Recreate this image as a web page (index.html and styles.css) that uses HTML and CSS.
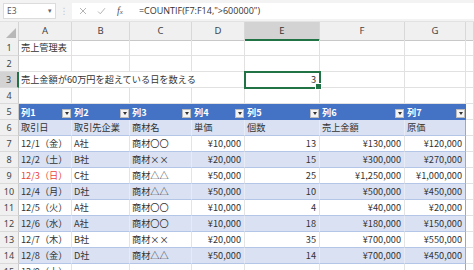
FILE: index.html
```html
<!DOCTYPE html>
<html lang="ja">
<head>
<meta charset="utf-8">
<title>売上管理表</title>
<link rel="stylesheet" href="styles.css">
</head>
<body>
<div class="fbar">
  <div class="namebox"><span>E3</span><span class="caret">▾</span></div>
  <div class="dots">⋮</div>
  <div class="finput">
    <svg class="ico" width="8" height="8" viewBox="0 0 8 8"><path d="M1 1L7 7M7 1L1 7" stroke="#b5b5b5" stroke-width="1" fill="none"/></svg>
    <svg class="ico chk" width="9" height="8" viewBox="0 0 9 8"><path d="M1 4.5L3.3 6.8L8 1.2" stroke="#b5b5b5" stroke-width="1" fill="none"/></svg>
    <span class="fx"><i>f</i><sub>x</sub></span>
    <span class="formula">=COUNTIF(F7:F14,"&gt;600000")</span>
  </div>
</div>
<div class="sheet">
  <div class="row hdr">
    <div class="corner"><svg width="10" height="10" viewBox="0 0 10 10"><path d="M10 0V10H0Z" fill="#b8b8b8"/></svg></div>
    <div class="ch">A</div><div class="ch">B</div><div class="ch">C</div><div class="ch">D</div><div class="ch selc">E</div><div class="ch">F</div><div class="ch">G</div><div class="ch"></div>
  </div>
  <div class="row">
    <div class="rh">1</div><div class="c">売上管理表</div><div class="c"></div><div class="c"></div><div class="c"></div><div class="c"></div><div class="c"></div><div class="c"></div><div class="c"></div>
  </div>
  <div class="row">
    <div class="rh">2</div><div class="c"></div><div class="c"></div><div class="c"></div><div class="c"></div><div class="c"></div><div class="c"></div><div class="c"></div><div class="c"></div>
  </div>
  <div class="row">
    <div class="rh selr">3</div><div class="c span4">売上金額が60万円を超えている日を数える</div><div class="c r sel">3</div><div class="c"></div><div class="c"></div><div class="c"></div>
  </div>
  <div class="row">
    <div class="rh">4</div><div class="c"></div><div class="c"></div><div class="c"></div><div class="c"></div><div class="c"></div><div class="c"></div><div class="c"></div><div class="c"></div>
  </div>
  <div class="row">
    <div class="rh">5</div>
    <div class="th"><span>列1</span><span class="dd"></span></div>
    <div class="th"><span>列2</span><span class="dd"></span></div>
    <div class="th"><span>列3</span><span class="dd"></span></div>
    <div class="th"><span>列4</span><span class="dd"></span></div>
    <div class="th"><span>列5</span><span class="dd"></span></div>
    <div class="th"><span>列6</span><span class="dd"></span></div>
    <div class="th"><span>列7</span><span class="dd"></span></div>
    <div class="c"></div>
  </div>
  <div class="row band">
    <div class="rh">6</div><div class="c t">取引日</div><div class="c t">取引先企業</div><div class="c t">商材名</div><div class="c t">単価</div><div class="c t">個数</div><div class="c t">売上金額</div><div class="c t last">原価</div><div class="c"></div>
  </div>
  <div class="row">
    <div class="rh">7</div><div class="c t">12/1（金）</div><div class="c t">A社</div><div class="c t">商材〇〇</div><div class="c t r">¥10,000</div><div class="c t r">13</div><div class="c t r">¥130,000</div><div class="c t r last">¥120,000</div><div class="c"></div>
  </div>
  <div class="row band">
    <div class="rh">8</div><div class="c t">12/2（土）</div><div class="c t">B社</div><div class="c t">商材××</div><div class="c t r">¥20,000</div><div class="c t r">15</div><div class="c t r">¥300,000</div><div class="c t r last">¥270,000</div><div class="c"></div>
  </div>
  <div class="row">
    <div class="rh">9</div><div class="c t red">12/3（日）</div><div class="c t">C社</div><div class="c t">商材△△</div><div class="c t r">¥50,000</div><div class="c t r">25</div><div class="c t r">¥1,250,000</div><div class="c t r last">¥1,000,000</div><div class="c"></div>
  </div>
  <div class="row band">
    <div class="rh">10</div><div class="c t">12/4（月）</div><div class="c t">D社</div><div class="c t">商材△△</div><div class="c t r">¥50,000</div><div class="c t r">10</div><div class="c t r">¥500,000</div><div class="c t r last">¥450,000</div><div class="c"></div>
  </div>
  <div class="row">
    <div class="rh">11</div><div class="c t">12/5（火）</div><div class="c t">A社</div><div class="c t">商材〇〇</div><div class="c t r">¥10,000</div><div class="c t r">4</div><div class="c t r">¥40,000</div><div class="c t r last">¥20,000</div><div class="c"></div>
  </div>
  <div class="row band">
    <div class="rh">12</div><div class="c t">12/6（水）</div><div class="c t">A社</div><div class="c t">商材〇〇</div><div class="c t r">¥10,000</div><div class="c t r">18</div><div class="c t r">¥180,000</div><div class="c t r last">¥150,000</div><div class="c"></div>
  </div>
  <div class="row">
    <div class="rh">13</div><div class="c t">12/7（木）</div><div class="c t">B社</div><div class="c t">商材××</div><div class="c t r">¥20,000</div><div class="c t r">35</div><div class="c t r">¥700,000</div><div class="c t r last">¥550,000</div><div class="c"></div>
  </div>
  <div class="row band">
    <div class="rh">14</div><div class="c t">12/8（金）</div><div class="c t">D社</div><div class="c t">商材△△</div><div class="c t r">¥50,000</div><div class="c t r">14</div><div class="c t r">¥700,000</div><div class="c t r last">¥450,000</div><div class="c"></div>
  </div>
  <div class="row">
    <div class="rh">15</div><div class="c t">12/9（土）</div><div class="c t"></div><div class="c t"></div><div class="c t"></div><div class="c t"></div><div class="c t"></div><div class="c t last"></div><div class="c"></div>
  </div>
</div>
</body>
</html>
```
FILE: styles.css
```css
* { box-sizing: border-box; }
html, body { margin: 0; padding: 0; }
body {
  width: 474px;
  height: 270px;
  overflow: hidden;
  background: #fff;
  font-family: "Noto Sans CJK JP", "Noto Sans", sans-serif;
}

/* formula bar */
.fbar {
  height: 22px;
  background: #f3f3f3;
  display: flex;
  align-items: center;
  padding-left: 3px;
  border-bottom: 1px solid #e2e2e2;
}
.namebox {
  width: 53px;
  height: 16px;
  background: #fff;
  border: 1px solid #dcdcdc;
  display: flex;
  align-items: center;
  justify-content: space-between;
  padding: 0 3px 0 3px;
  font: 8.5px "Open Sans", sans-serif;
  color: #555;
}
.caret { font-size: 7px; color: #666; }
.dots {
  width: 16px;
  text-align: center;
  color: #c4c4c4;
  font: 9px "DejaVu Sans", sans-serif;
}
.finput {
  flex: 1;
  height: 16px;
  background: #fff;
  display: flex;
  align-items: center;
  padding-left: 7px;
}
.ico { margin-right: 10px; }
.chk { margin-right: 11px; }
.fx {
  font: 9px "Liberation Serif", serif;
  color: #555;
  margin-right: 16px;
  display: flex;
  align-items: baseline;
}
.fx i { font-style: italic; font-size: 10px; }
.fx sub { font-size: 7px; font-style: italic; vertical-align: baseline; margin-left: 0; }
.formula {
  font: 9px "Open Sans", sans-serif;
  color: #333;
  white-space: nowrap;
}

/* sheet */
.sheet { display: flex; flex-direction: column; }
.row {
  display: grid;
  grid-template-columns: 19px 53px 58px 62px 53px 75px 85px 61px 1fr;
  height: 16px;
}
.row.hdr { height: 18px; }
.corner {
  background: #f0f0f0;
  border-right: 1px solid #d4d4d4;
  border-bottom: 1px solid #c8c8c8;
  display: flex;
  align-items: flex-end;
  justify-content: flex-end;
  padding: 0 2px 2px 0;
}
.ch {
  background: #f0f0f0;
  border-right: 1px solid #d8d8d8;
  border-bottom: 1px solid #c8c8c8;
  font: 9.5px "Noto Sans", sans-serif;
  color: #444;
  text-align: center;
  line-height: 17px;
}
.ch.selc {
  background: #d3d3d3;
  border-bottom: 2px solid #217346;
  color: #333;
}
.rh {
  background: #f0f0f0;
  border-right: 1px solid #c8c8c8;
  border-bottom: 1px solid #dadada;
  font: 9px "Noto Sans", sans-serif;
  color: #444;
  text-align: center;
  line-height: 15px;
}
.rh.selr {
  background: #d3d3d3;
  border-right: 2px solid #217346;
}
.c {
  border-right: 1px solid #e1e1e1;
  border-bottom: 1px solid #e1e1e1;
  padding: 0 3px 0 2px;
  font-size: 9.2px;
  line-height: 15px;
  color: #333;
  white-space: nowrap;
}
.c.r { text-align: right; }
.span4 { grid-column: span 4; }
.sel {
  position: relative;
  outline: 2px solid #217346;
  outline-offset: -1px;
}
.sel::after {
  content: "";
  position: absolute;
  right: -3px;
  bottom: -3px;
  width: 5px;
  height: 5px;
  background: #217346;
  border: 1px solid #fff;
}

/* table */
.th {
  background: #4472c4;
  color: #fff;
  font-weight: bold;
  font-size: 9.2px;
  display: flex;
  justify-content: space-between;
  align-items: center;
  padding-left: 2px;
  border-bottom: 1px solid #4472c4;
}
.dd {
  width: 9px;
  height: 9px;
  align-self: flex-end;
  margin: 0 1px 1px 0;
  background: #f4f4f4;
  border: 1px solid #bcbcbc;
  display: flex;
  align-items: center;
  justify-content: center;
}
.dd::before {
  content: "";
  border-left: 2.5px solid transparent;
  border-right: 2.5px solid transparent;
  border-top: 3px solid #333;
}
.c.t {
  border-bottom: 1px solid #b4c6e7;
  border-right: 1px solid #e4e4e4;
}
.band .c.t {
  background: #d9e1f2;
  border-right: 1px solid #e6ebf6;
}
.c.t.last { border-right: 1px solid #8ea9db; }
.band .c.t.last { border-right: 1px solid #8ea9db; }
.red { color: #e8453c; }
```
